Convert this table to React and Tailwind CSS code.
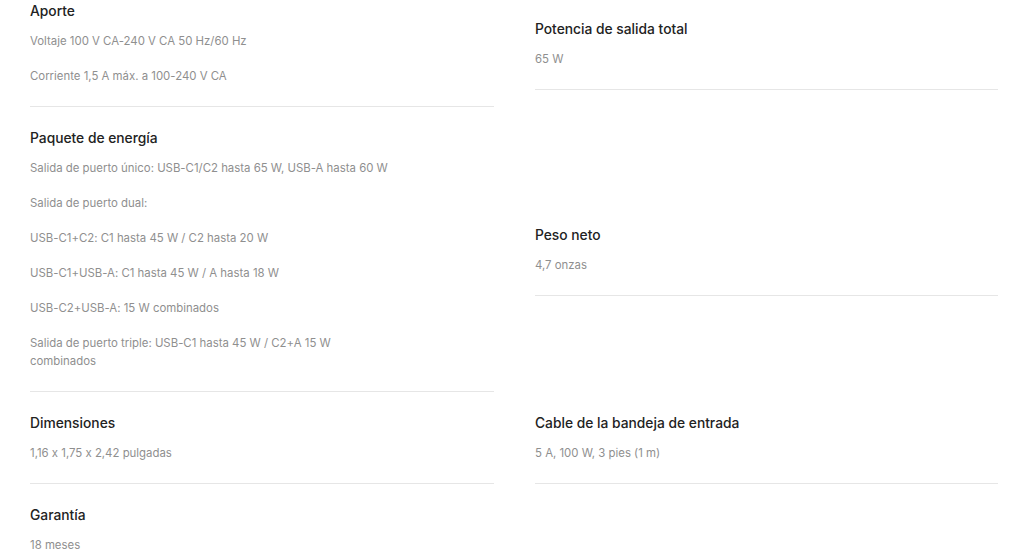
export default function App() {
  const rows = [
    [
      { title: "Aporte", items: ["Voltaje 100 V CA-240 V CA 50 Hz/60 Hz", "Corriente 1,5 A máx. a 100-240 V CA"] },
      { title: "Potencia de salida total", items: ["65 W"] },
    ],
    [
      {
        title: "Paquete de energía",
        items: [
          "Salida de puerto único: USB-C1/C2 hasta 65 W, USB-A hasta 60 W",
          "Salida de puerto dual:",
          "USB-C1+C2: C1 hasta 45 W / C2 hasta 20 W",
          "USB-C1+USB-A: C1 hasta 45 W / A hasta 18 W",
          "USB-C2+USB-A: 15 W combinados",
          ["Salida de puerto triple: USB-C1 hasta 45 W / C2+A 15 W", "combinados"],
        ],
      },
      { title: "Peso neto", items: ["4,7 onzas"] },
    ],
    [
      { title: "Dimensiones", items: ["1,16 x 1,75 x 2,42 pulgadas"] },
      { title: "Cable de la bandeja de entrada", items: ["5 A, 100 W, 3 pies (1 m)"] },
    ],
    [{ title: "Garantía", items: ["18 meses"] }],
  ]

  return (
    <div className="min-h-[555px] bg-white pl-[30px] pt-[1px] font-['Inter',sans-serif] [font-feature-settings:'calt'_0]">
      <div className="grid grid-cols-[464px_463px] items-center gap-x-[41px] gap-y-[21px]">
        {rows.map((row, r) =>
          [0, 1].map((c) => {
            const spec = row[c]
            if (!spec) return <div key={`${r}-${c}`} />
            return (
              <div key={`${r}-${c}`} className={`pb-[21px] ${r < 3 ? "border-b border-[#e6e6e6]" : ""}`}>
                <h3 className="text-[13.8px] leading-[20px] font-medium text-[#222]">{spec.title}</h3>
                <div className="mt-[11px] flex flex-col gap-[17px]">
                  {spec.items.map((it, i) => (
                    <p key={i} className="text-[11.4px] leading-[18px] text-[#8f8f8f]">
                      {Array.isArray(it) ? (
                        <>
                          {it[0]}
                          <br />
                          {it[1]}
                        </>
                      ) : (
                        it
                      )}
                    </p>
                  ))}
                </div>
              </div>
            )
          })
        )}
      </div>
    </div>
  )
}
